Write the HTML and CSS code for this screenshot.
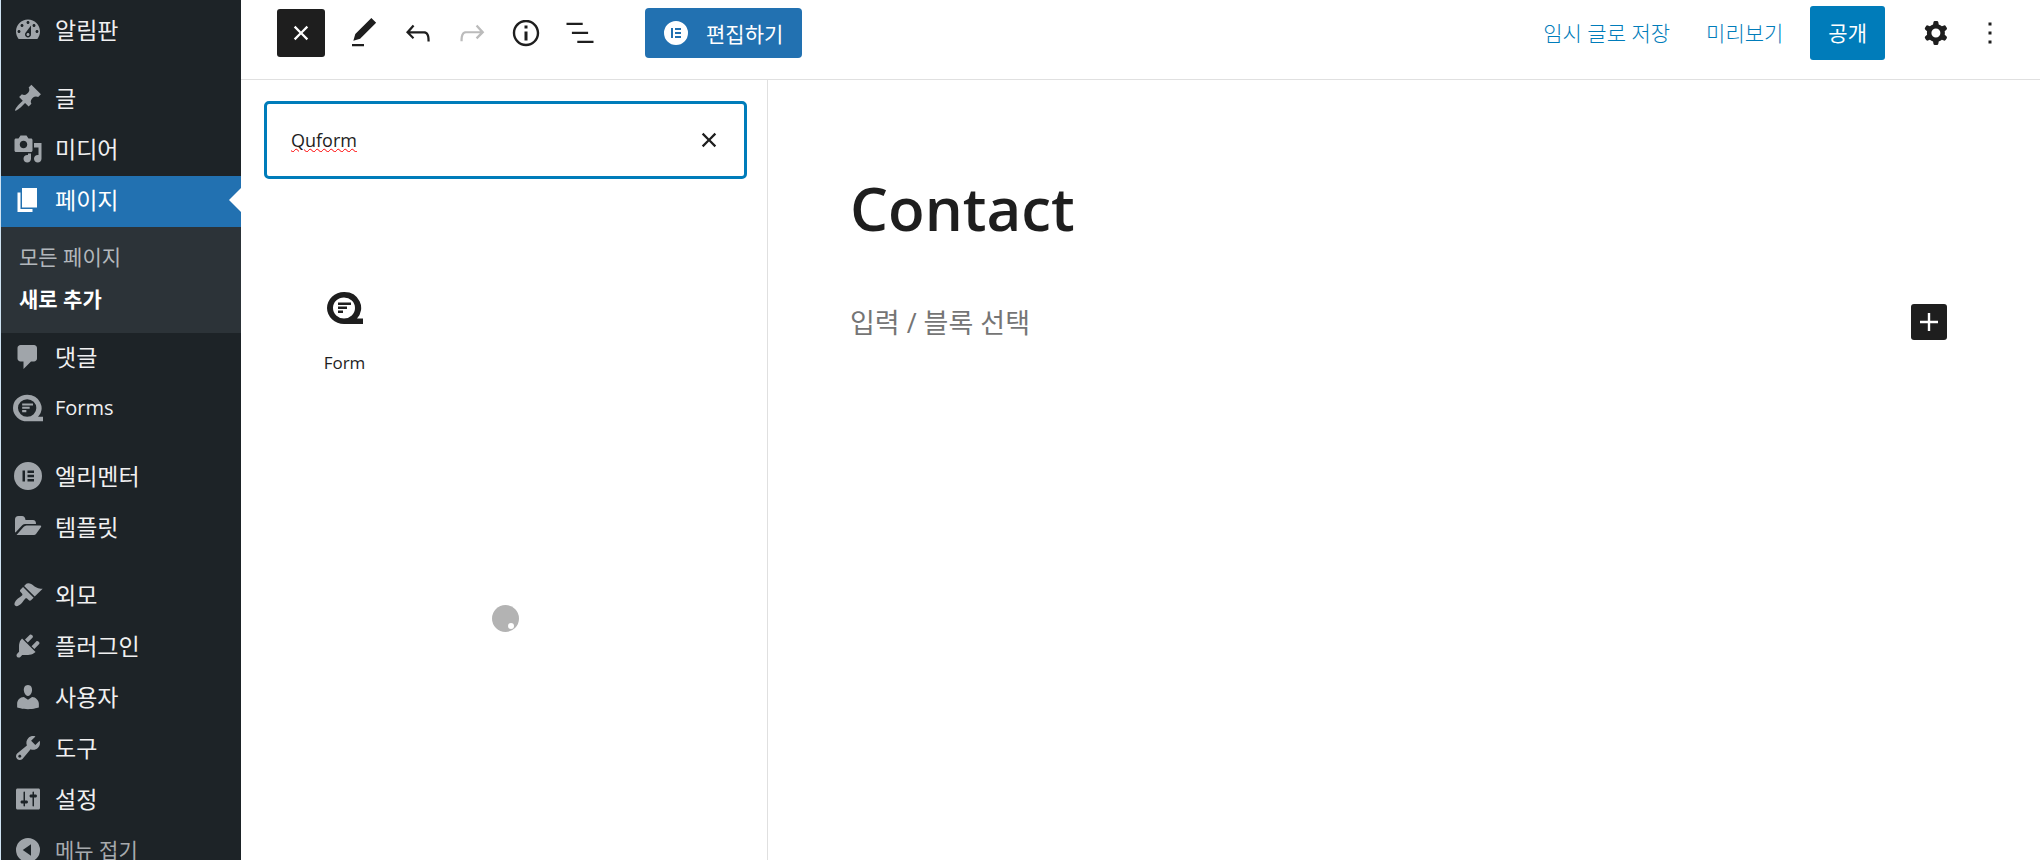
FILE: index.html
```html
<!DOCTYPE html>
<html lang="ko">
<head>
    <meta charset="UTF-8">
    <meta name="viewport" content="width=device-width, initial-scale=1.0">
    <title>새 페이지 추가</title>
    <link rel="stylesheet" href="styles.css">
</head>
<body>
    <nav class="sidebar">
        <ul class="menu">
            <li><a href="#"><svg class="icon" viewBox="0 0 20 20"><path d="M3.76 16h12.48c1.1-1.37 1.76-3.11 1.76-5 0-4.42-3.58-8-8-8s-8 3.58-8 8c0 1.89.66 3.63 1.76 5zM10 4c.55 0 1 .45 1 1s-.45 1-1 1-1-.45-1-1 .45-1 1-1zM6 6c.55 0 1 .45 1 1s-.45 1-1 1-1-.45-1-1 .45-1 1-1zm8 0c.55 0 1 .45 1 1s-.45 1-1 1-1-.45-1-1 .45-1 1-1zm-5.37 5.55L12 7v6c0 1.1-.9 2-2 2s-2-.9-2-2c0-.57.24-1.08.63-1.45zM4 10c.55 0 1 .45 1 1s-.45 1-1 1-1-.45-1-1 .45-1 1-1zm12 0c.55 0 1 .45 1 1s-.45 1-1 1-1-.45-1-1 .45-1 1-1zm-5 3c0-.55-.45-1-1-1s-1 .45-1 1 .45 1 1 1 1-.45 1-1z"/></svg>알림판</a></li>
            <li class="group"><a href="#"><svg class="icon" viewBox="0 0 20 20"><path d="M10.44 3.02l1.82-1.82 6.36 6.35-1.83 1.82c-1.05-.68-2.48-.57-3.41.36l-.75.75c-.92.93-1.04 2.35-.35 3.41l-1.83 1.82-2.41-2.41-2.8 2.79c-.42.42-3.38 2.71-3.8 2.29s1.86-3.39 2.28-3.81l2.79-2.79L4.1 9.36l1.83-1.82c1.05.69 2.48.57 3.4-.36l.75-.75c.93-.92 1.05-2.35.36-3.41z"/></svg>글</a></li>
            <li><a href="#"><svg class="icon" viewBox="0 0 20 20"><path d="M13 11V4c0-.55-.45-1-1-1h-1.67L9 1H5L3.67 3H2c-.55 0-1 .45-1 1v7c0 .55.45 1 1 1h10c.55 0 1-.45 1-1zM7 4.5c1.38 0 2.5 1.12 2.5 2.5S8.38 9.5 7 9.5 4.5 8.38 4.5 7 5.62 4.5 7 4.5zM14 6h5v10.5c0 1.38-1.12 2.5-2.5 2.5S14 17.88 14 16.5s1.12-2.5 2.5-2.5c.17 0 .34.02.5.05V9h-3V6zm-4 8.05V13h2v3.5c0 1.38-1.12 2.5-2.5 2.5S7 17.88 7 16.5 8.12 14 9.5 14c.17 0 .34.02.5.05z"/></svg>미디어</a></li>
            <li class="current">
                <a href="#"><svg class="icon" viewBox="0 0 20 20"><path d="M6 15V2h10v13H6zm-1 1h8v2H3V5h2v11z"/></svg>페이지</a>
                <ul class="submenu">
                    <li><a href="#">모든 페이지</a></li>
                    <li><a href="#" class="active">새로 추가</a></li>
                </ul>
            </li>
            <li><a href="#"><svg class="icon" viewBox="0 0 20 20"><path d="M5 2h9c1.1 0 2 .9 2 2v7c0 1.1-.9 2-2 2h-2l-5 5v-5H5c-1.1 0-2-.9-2-2V4c0-1.1.9-2 2-2z"/></svg>댓글</a></li>
            <li><a href="#" lang="en"><svg class="icon" viewBox="0 0 36 32"><path fill-rule="evenodd" d="M17 0a17 16 0 0 1 13 26.500H36V32H17A17 16 0 0 1 17 0zm0 5.500a11 10.500 0 1 0 0 21 11 10.500 0 0 0 0-21z"/><path d="M11 10.500h13v2.500H11zM11 14.500h9V17h-9zM11 18.500h5V21h-5z"/></svg>Forms</a></li>
            <li class="group"><a href="#"><svg class="icon" viewBox="0 0 30 30"><path fill-rule="evenodd" d="M15 1a14 14 0 1 1 0 28 14 14 0 0 1 0-28zM9.500 9.500v11H12v-11zm5 0V12h6.500V9.500zm0 4.250v2.500h6.500v-2.500zm0 4.250v2.500h6.500V18z"/></svg>엘리멘터</a></li>
            <li><a href="#"><svg class="icon" viewBox="0 0 30 30"><path d="M2 20V7.500Q2 4 5.500 4H9q3 0 3.500 4H20q3 0 3 4H12q-2 0-3.500 2L2.500 20.500z"/><path d="M3.500 23l7-8q1.300-1.500 3-1.500H27.500q1.200.2.500 1.500l-5 7q-.8 1-2 1z"/></svg>템플릿</a></li>
            <li class="group"><a href="#"><svg class="icon" viewBox="0 0 20 20"><path d="M14.480 11.060L7.410 3.990l1.500-1.500c.5-.56 2.300-.47 3.510.32 1.210.8 1.430 1.280 2.910 2.100 1.180.64 2.450 1.260 4.450.85zm-.71.71L6.700 4.700 4.930 6.470c-.39.39-.39 1.020 0 1.410l1.060 1.060c.39.39.39 1.030 0 1.420-.6.6-1.430 1.110-2.210 1.690-.35.26-.7.53-1.010.84C1.430 14.230.4 16.080 1.400 17.070c.99 1 2.840-.03 4.180-1.360.31-.31.58-.66.85-1.020.57-.78 1.080-1.610 1.690-2.210.39-.39 1.020-.39 1.410 0l1.060 1.060c.39.39 1.020.39 1.410 0z"/></svg>외모</a></li>
            <li><a href="#"><svg class="icon" viewBox="0 0 20 20"><path d="M13.110 4.360L9.870 7.600 8 5.730l3.240-3.240c.35-.34 1.050-.2 1.560.32.52.51.66 1.210.31 1.550zm-8 1.770l.91-1.120 9.010 9.010-1.190.84c-.71.71-2.630 1.160-3.820 1.160H6.140L4.900 17.260c-.59.59-1.540.59-2.120 0-.59-.58-.59-1.530 0-2.120l1.240-1.240v-3.880c0-1.130.4-3.190 1.090-3.890zm7.260 3.970l3.240-3.240c.34-.35 1.040-.21 1.550.31.52.51.66 1.210.31 1.550l-3.240 3.250z"/></svg>플러그인</a></li>
            <li><a href="#"><svg class="icon" viewBox="0 0 20 20"><path d="M10 9.250c-2.270 0-2.730-3.440-2.730-3.440C7 4.020 7.820 2 9.970 2c2.160 0 2.980 2.020 2.710 3.810 0 0-.41 3.440-2.680 3.440zm0 2.570L12.720 10c2.390 0 4.520 2.330 4.520 4.530v2.490s-3.650 1.130-7.240 1.130c-3.650 0-7.240-1.130-7.240-1.130v-2.490c0-2.250 1.940-4.480 4.470-4.480z"/></svg>사용자</a></li>
            <li><a href="#"><svg class="icon" viewBox="0 0 20 20"><path d="M16.680 9.770c-1.340 1.340-3.300 1.670-4.950.99l-5.410 6.520c-.99.99-2.590.99-3.580 0s-.99-2.590 0-3.570l6.520-5.420c-.68-1.650-.35-3.610.99-4.950 1.280-1.280 3.120-1.620 4.720-1.060l-2.890 2.890 2.820 2.820 2.860-2.870c.53 1.580.18 3.390-1.080 4.650zM3.810 16.210c.4.39 1.040.39 1.430 0 .4-.4.4-1.040 0-1.430-.39-.4-1.030-.4-1.430 0-.39.39-.39 1.030 0 1.430z"/></svg>도구</a></li>
            <li><a href="#"><svg class="icon" viewBox="0 0 20 20"><path d="M18 16V4c0-.55-.45-1-1-1H3c-.55 0-1 .45-1 1v12c0 .55.45 1 1 1h14c.55 0 1-.45 1-1zM8 11h1c.55 0 1 .45 1 1s-.45 1-1 1H8v1.500c0 .28-.22.5-.5.5s-.5-.22-.5-.5V13H6c-.55 0-1-.45-1-1s.45-1 1-1h1V5.500c0-.28.22-.5.5-.5s.5.22.5.5V11zm5-2h-1c-.55 0-1-.45-1-1s.45-1 1-1h1V5.500c0-.28.22-.5.5-.5s.5.22.5.5V7h1c.55 0 1 .45 1 1s-.45 1-1 1h-1v5.500c0 .28-.22.5-.5.5s-.5-.22-.5-.5V9z"/></svg>설정</a></li>
            <li><button type="button" class="collapse"><svg class="icon" viewBox="0 0 20 20"><path fill-rule="evenodd" d="M10 2a8 8 0 1 1 0 16 8 8 0 0 1 0-16zm2 4.200L6.500 10l5.500 3.800z"/></svg>메뉴 접기</button></li>
        </ul>
    </nav>

    <div class="editor">
        <header class="header">
            <div class="tools">
                <button type="button" class="tool inserter" aria-label="블록 삽입기 닫기"><svg viewBox="0 0 24 24"><path d="M12 13.060l3.712 3.713 1.061-1.060L13.061 12l3.712-3.712-1.060-1.060L12 10.938 8.288 7.227l-1.061 1.060L10.939 12l-3.712 3.712 1.060 1.061L12 13.061z"/></svg></button>
                <button type="button" class="tool" aria-label="도구"><svg viewBox="0 0 24 24"><path d="M20.100 5.100L16.900 2 6.200 12.700l-1.300 4.400 4.500-1.300L20.100 5.100zM4 20.800h8v-1.500H4v1.500z"/></svg></button>
                <button type="button" class="tool" aria-label="되돌리기"><svg viewBox="0 0 24 24"><path d="M18.300 11.700c-.6-.6-1.400-.9-2.300-.9H6.700l2.900-3.300-1.100-1-4.500 5L8.500 16l1-1-2.700-2.700H16c.5 0 .9.2 1.300.5 1 1 1 3.400 1 4.500v.3h1.500v-.2c0-1.500 0-4.300-1.500-5.700z"/></svg></button>
                <button type="button" class="tool" aria-label="다시 실행" disabled><svg viewBox="0 0 24 24"><path d="M15.600 6.500l-1.100 1 2.900 3.300H8c-.9 0-1.700.3-2.300.9-1.400 1.500-1.400 4.200-1.400 5.600v.2h1.500v-.3c0-1.100 0-3.500 1-4.500.3-.3.7-.5 1.300-.5h9.200L14.500 15l1.100 1.100 4.600-4.600-4.600-5z"/></svg></button>
                <button type="button" class="tool" aria-label="상세 정보"><svg viewBox="0 0 24 24"><path d="M12 3.200c-4.800 0-8.800 3.900-8.800 8.800 0 4.800 3.900 8.800 8.800 8.800 4.800 0 8.800-3.900 8.800-8.800 0-4.800-4-8.800-8.800-8.800zm0 16c-4 0-7.200-3.300-7.200-7.200C4.800 8 8 4.800 12 4.800s7.200 3.300 7.200 7.200c0 4-3.200 7.200-7.200 7.200zM11 17h2v-6h-2v6zm0-8h2V7h-2v2z"/></svg></button>
                <button type="button" class="tool" aria-label="목록 보기"><svg viewBox="0 0 24 24"><path d="M13.800 5.200H3v1.500h10.800V5.200zm-3.600 12v1.500H21v-1.500H10.200zm7.200-6H6.600v1.500h10.800v-1.500z"/></svg></button>
            </div>
            <button type="button" class="elementor-btn"><svg viewBox="0 0 24 24"><path fill-rule="evenodd" d="M12 0a12 12 0 1 1 0 24 12 12 0 0 1 0-24zM7 7v10h2V7zm4 0v2h6V7zm0 4v2h6v-2zm0 4v2h6v-2z"/></svg>편집하기</button>
            <div class="actions">
                <button type="button" class="text-btn">임시 글로 저장</button>
                <button type="button" class="text-btn">미리보기</button>
                <button type="button" class="publish">공개</button>
                <button type="button" class="tool" aria-label="설정"><svg viewBox="0 0 24 24"><path fill-rule="evenodd" d="M10.289 4.836A1 1 0 0111.275 4h1.306a1 1 0 01.987.836l.244 1.466c.787.26 1.503.679 2.108 1.218l1.393-.522a1 1 0 011.216.437l.653 1.130a1 1 0 01-.23 1.273l-1.148.944a6.025 6.025 0 010 2.435l1.149.946a1 1 0 01.23 1.272l-.653 1.130a1 1 0 01-1.216.437l-1.394-.522c-.605.54-1.320.958-2.108 1.218l-.244 1.466a1 1 0 01-.987.836h-1.306a1 1 0 01-.986-.836l-.244-1.466a5.995 5.995 0 01-2.108-1.218l-1.394.522a1 1 0 01-1.217-.436l-.653-1.131a1 1 0 01.23-1.272l1.149-.946a6.026 6.026 0 010-2.435l-1.148-.944a1 1 0 01-.23-1.272l.653-1.131a1 1 0 011.217-.437l1.393.522a5.994 5.994 0 012.108-1.218l.244-1.466zM14.929 12a3 3 0 11-6 0 3 3 0 016 0z"/></svg></button>
                <button type="button" class="tool" aria-label="옵션"><svg viewBox="0 0 24 24"><path d="M13 19h-2v-2h2v2zm0-6h-2v-2h2v2zm0-6h-2V5h2v2z"/></svg></button>
            </div>
        </header>

        <div class="workspace">
            <aside class="panel">
                <div class="search">
                    <input type="text" value="Quform" aria-label="블록 검색">
                    <button type="button" aria-label="검색 초기화"><svg viewBox="0 0 24 24"><path d="M12 13.060l3.712 3.713 1.061-1.060L13.061 12l3.712-3.712-1.060-1.060L12 10.938 8.288 7.227l-1.061 1.060L10.939 12l-3.712 3.712 1.060 1.061L12 13.061z"/></svg></button>
                </div>
                <div class="blocks">
                    <button type="button" class="block">
                        <svg viewBox="0 0 36 32"><path fill-rule="evenodd" d="M17 0a17 16 0 0 1 13 26.500H36V32H17A17 16 0 0 1 17 0zm0 5.500a11 10.500 0 1 0 0 21 11 10.500 0 0 0 0-21z"/><path d="M11 10.500h13v2.500H11zM11 14.500h9V17h-9zM11 18.500h5V21h-5z"/></svg>
                        <span>Form</span>
                    </button>
                </div>
                <div class="spinner"></div>
            </aside>

            <main class="canvas">
                <input type="text" class="title" value="Contact" aria-label="제목 추가" spellcheck="false">
                <div class="paragraph">
                    <input type="text" placeholder="입력 / 블록 선택" aria-label="빈 블록">
                    <button type="button" class="add" aria-label="블록 추가"><svg viewBox="0 0 24 24"><path d="M18 11.200h-5.200V6h-1.600v5.200H6v1.600h5.200V18h1.600v-5.200H18z"/></svg></button>
                </div>
            </main>
        </div>
    </div>
</body>
</html>
```
FILE: styles.css
```css
* {
    margin: 0;
    padding: 0;
    box-sizing: border-box;
}

body {
    display: flex;
    height: 100vh;
    overflow: hidden;
    border-left: 1px solid #cfe3f3;
    background: #fff;
    color: #1e1e1e;
    font-family: "Open Sans", "Noto Sans CJK KR", sans-serif;
    font-size: 21px;
}

button,
input {
    font: inherit;
    color: inherit;
    border: none;
    background: none;
}

button {
    cursor: pointer;
}

ul {
    list-style: none;
}

a {
    text-decoration: none;
}

svg {
    display: block;
    fill: currentColor;
}

/* Admin menu */
.sidebar {
    flex: none;
    width: 240px;
    padding-top: 6px;
    background: #1d2327;
}

.menu > li > a,
.collapse {
    display: flex;
    align-items: center;
    gap: 12px;
    width: 100%;
    height: 51px;
    padding: 0 0 3px 12px;
    color: #f0f0f1;
    font-size: 23px;
    line-height: 30px;
}

.menu a:lang(en) {
    font-size: 20px;
}

.menu .group {
    margin-top: 17px;
}

.icon {
    flex: none;
    width: 30px;
    height: 30px;
    color: #a0a5aa;
}

.menu > .current > a {
    position: relative;
    background: #2271b1;
    color: #fff;
}

.current .icon {
    color: #fff;
}

.current > a::after {
    content: "";
    position: absolute;
    right: 0;
    border: 12px solid transparent;
    border-left: none;
    border-right-color: #fff;
}

.submenu {
    padding: 9px 0 13px;
    background: #2c3338;
}

.submenu a {
    display: block;
    padding: 6px 18px;
    color: #b2b7bc;
    line-height: 30px;
}

.submenu .active {
    color: #fff;
    font-weight: 700;
}

.menu .collapse {
    color: #a7aaad;
    font-size: 21px;
}

/* Editor */
.editor {
    flex: 1;
    display: flex;
    flex-direction: column;
    min-width: 0;
}

.header {
    display: flex;
    align-items: center;
    height: 80px;
    padding: 0 26px 14px 36px;
    border-bottom: 1px solid #e0e0e0;
}

.tools,
.actions {
    display: flex;
    align-items: center;
    gap: 6px;
}

.tool {
    display: grid;
    place-items: center;
    width: 48px;
    height: 48px;
}

.tool svg {
    width: 36px;
    height: 36px;
}

.tool:disabled {
    color: #bbb;
}

.inserter {
    margin-right: 9px;
    border-radius: 3px;
    background: #1e1e1e;
    color: #fff;
}

.elementor-btn {
    display: flex;
    align-items: center;
    gap: 18px;
    height: 50px;
    margin-left: 41px;
    padding: 0 19px;
    border-radius: 4px;
    background: #2271b1;
    color: #fff;
}

.elementor-btn svg {
    width: 24px;
    height: 24px;
}

.actions {
    margin-left: auto;
}

.text-btn {
    height: 54px;
    padding: 0 15px 2px;
    color: #007cba;
    font-weight: 300;
}

.publish {
    height: 54px;
    margin: 0 21px 0 6px;
    padding: 0 18px 2px;
    border-radius: 3px;
    background: #007cba;
    color: #fff;
}

.workspace {
    flex: 1;
    display: flex;
}

/* Block inserter */
.panel {
    flex: none;
    width: 527px;
    padding: 21px 20px 0 23px;
    border-right: 1px solid #e0e0e0;
}

.search {
    display: flex;
    align-items: center;
    height: 78px;
    padding: 0 17px 0 24px;
    border: 3px solid #007cba;
    border-radius: 5px;
}

.search input {
    flex: 1;
    min-width: 0;
    height: 60px;
    outline: none;
    font-size: 18px;
    text-decoration: underline wavy #f00 1px;
}

.search svg {
    width: 36px;
    height: 36px;
}

.blocks {
    display: grid;
    grid-template-columns: repeat(3, 1fr);
    margin-top: 95px;
}

.block {
    display: flex;
    flex-direction: column;
    align-items: center;
    gap: 24px;
    padding: 18px 0;
    font-size: 17px;
    line-height: 30px;
}

.block svg {
    width: 36px;
    height: 32px;
}

.spinner {
    position: relative;
    width: 27px;
    height: 27px;
    margin: 209px auto 0;
    border-radius: 50%;
    background: #b3b3b3;
}

.spinner::after {
    content: "";
    position: absolute;
    right: 5px;
    bottom: 3px;
    width: 6px;
    height: 6px;
    border-radius: 50%;
    background: #fff;
}

/* Page content */
.canvas {
    flex: 1;
    min-width: 0;
    padding: 87px 93px 0 82px;
}

.title {
    display: block;
    width: 100%;
    height: 82px;
    font-size: 60px;
    font-weight: 600;
}

.paragraph {
    display: flex;
    align-items: center;
    margin-top: 50px;
}

.paragraph input {
    flex: 1;
    min-width: 0;
    height: 46px;
    font-size: 27px;
}

.paragraph input::placeholder {
    color: #757575;
}

.add {
    width: 36px;
    height: 36px;
    border-radius: 3px;
    background: #1e1e1e;
    color: #fff;
}

.add svg {
    width: 36px;
    height: 36px;
}
```
